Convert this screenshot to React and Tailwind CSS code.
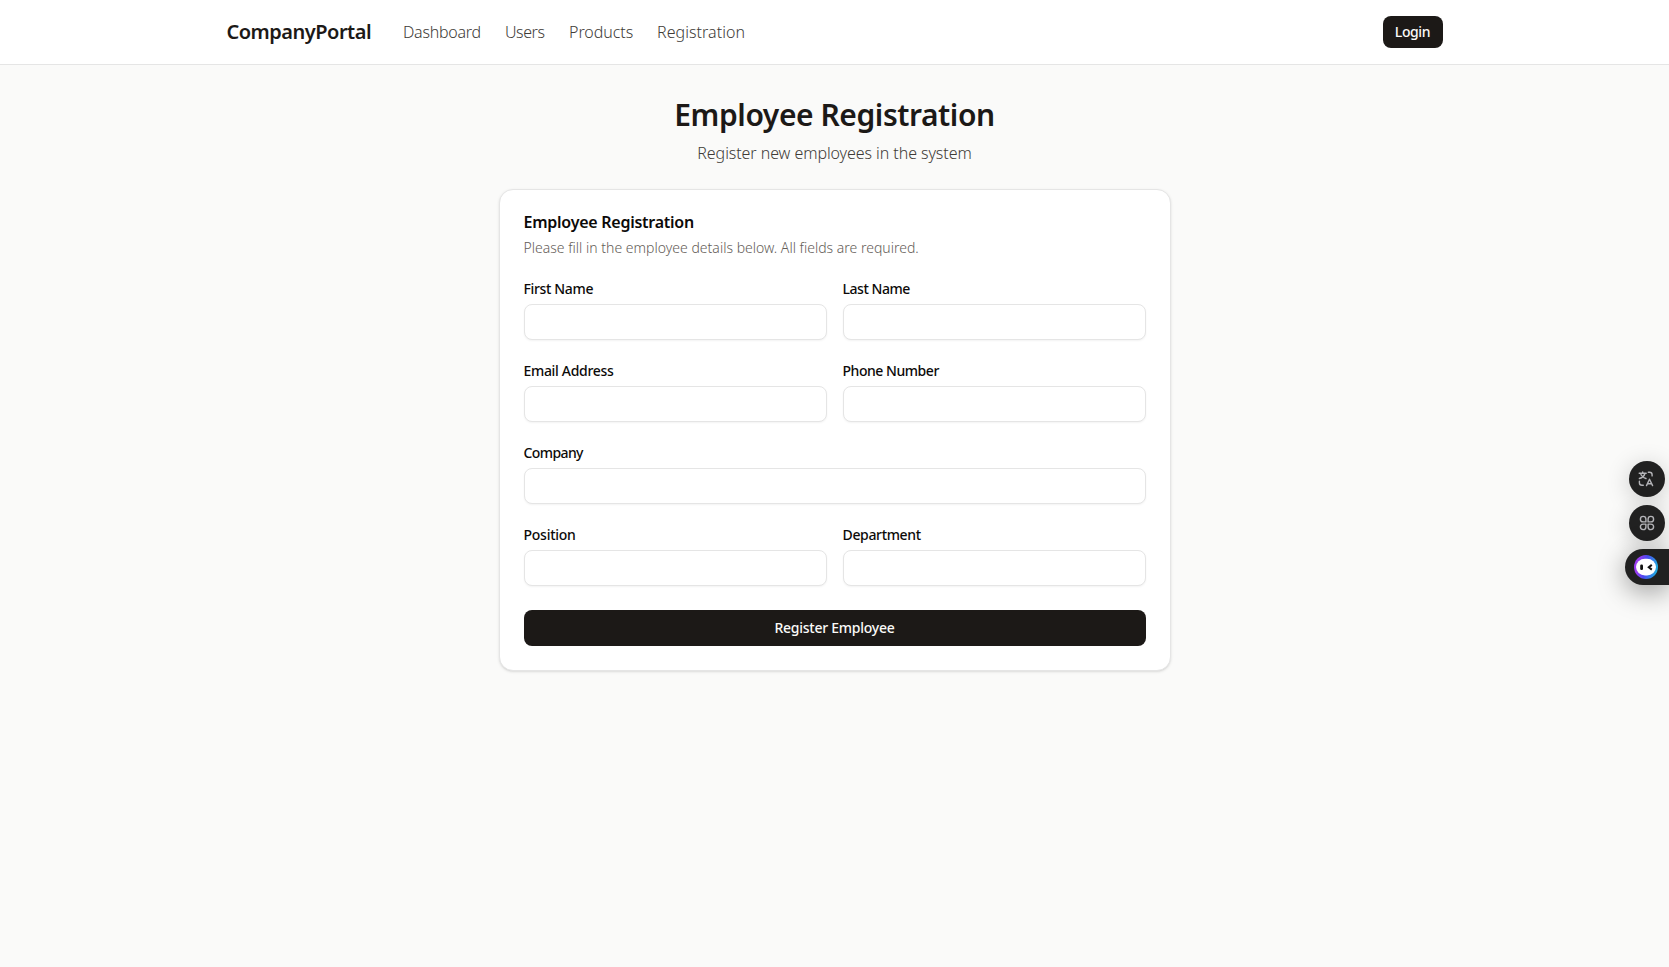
import React from "react";

const NAV = [
  { label: "Dashboard", cls: "w-[78px] tracking-[-0.27px]" },
  { label: "Users", cls: "w-[40px] tracking-[-0.45px]" },
  { label: "Products", cls: "w-[64px] tracking-[-0.04px]" },
  { label: "Registration", cls: "w-[88px] tracking-[0.05px]" },
];

function Field({ label, tracking = "tracking-[-0.35px]", className = "" }) {
  return (
    <label className={`grid gap-2 ${className}`}>
      <span className={`text-sm leading-none font-medium text-[#0c0a09] ${tracking}`}>{label}</span>
      <input className="h-9 w-full rounded-lg border border-[#e5e5e5] bg-white px-3 text-sm shadow-xs outline-none" />
    </label>
  );
}

function TranslateIcon() {
  return (
    <svg width="18" height="18" viewBox="0 0 18 18" fill="none" stroke="#b4b4b8" strokeWidth="1.4" strokeLinecap="round" strokeLinejoin="round">
      <path d="M1.2 3.3h7M4.7 1.9v1.4M6.9 3.5C6.3 5.8 4.3 7.7 1.4 8.5M2.6 3.6C3.3 5.8 5.2 7.7 8 8.5" />
      <path d="M10.3 2.3h1.3a2.5 2.5 0 0 1 2.5 2.5v1.1" />
      <path d="M1.4 11.2v1.5a2.5 2.5 0 0 0 2.5 2.5h1.4" />
      <path d="M8.5 15.6l3-6.4L14.6 15.6M9.5 13.7h4" />
    </svg>
  );
}

function CloverIcon() {
  return (
    <svg width="18" height="18" viewBox="0 0 18 18" fill="none" stroke="#b4b4b8" strokeWidth="1.4" strokeLinejoin="round">
      <path d="M7.9 7.9H5.1A2.75 2.75 0 1 1 7.9 5.1Z" />
      <path d="M10.1 7.9h2.8A2.75 2.75 0 1 0 10.1 5.1Z" />
      <path d="M7.9 10.1H5.1A2.75 2.75 0 1 0 7.9 12.9Z" />
      <path d="M10.1 10.1h2.8A2.75 2.75 0 1 1 10.1 12.9Z" />
    </svg>
  );
}

function BotIcon() {
  return (
    <svg width="24" height="24" viewBox="0 0 24 24">
      <defs>
        <linearGradient id="ring" x1="0.1" y1="0.7" x2="0.9" y2="0.85">
          <stop offset="0" stopColor="#9a3cf0" />
          <stop offset="0.4" stopColor="#4a48f0" />
          <stop offset="1" stopColor="#22a8e0" />
        </linearGradient>
      </defs>
      <circle cx="12" cy="12" r="12" fill="url(#ring)" />
      <rect x="2" y="3.8" width="20" height="16.6" rx="9" ry="8.3" fill="#fff" />
      <rect x="6.2" y="9.6" width="2.8" height="5.4" rx="1.2" fill="#111" />
      <path d="M17.8 9.9L14.8 12.3l3 2.3" fill="none" stroke="#111" strokeWidth="2" />
    </svg>
  );
}

export default function App() {
  return (
    <div className="min-h-screen bg-[#fafaf9] font-['Noto_Sans',sans-serif]">
      <header className="border-b border-[#e5e5e5] bg-white">
        <div className="mx-auto flex h-16 max-w-7xl items-center justify-between px-8">
          <div className="flex items-center gap-8">
            <span className="w-[144.5px] text-xl font-semibold tracking-[-0.5px] whitespace-nowrap text-[#1c1917]">CompanyPortal</span>
            <nav className="flex gap-6">
              {NAV.map((n) => (
                <a key={n.label} className={`${n.cls} text-base font-light whitespace-nowrap text-[#403b37]`}>{n.label}</a>
              ))}
            </nav>
          </div>
          <button className="h-8 w-[60px] rounded-lg bg-[#1c1917] text-sm font-medium tracking-[-0.4px] text-[#fafaf9]">Login</button>
        </div>
      </header>

      <main className="mx-auto max-w-7xl px-8 py-8">
        <div className="mb-6 text-center">
          <h1 className="mb-2 text-3xl font-semibold tracking-[-0.43px] text-[#1c1917]">Employee Registration</h1>
          <p className="text-base font-light tracking-[-0.07px] text-[#403b37]">Register new employees in the system</p>
        </div>
        <section className="mx-auto flex max-w-2xl flex-col gap-6 rounded-[14px] border border-[#e5e5e5] bg-white p-6 shadow-sm">
          <div className="grid gap-2">
            <h2 className="text-base leading-none font-semibold tracking-[-0.25px] text-[#0c0a09]">Employee Registration</h2>
            <p className="text-sm font-light tracking-[0.01px] text-[#645d58]">Please fill in the employee details below. All fields are required.</p>
          </div>
          <form className="grid grid-cols-2 gap-x-4 gap-y-6">
            <Field label="First Name" />
            <Field label="Last Name" tracking="tracking-[-0.46px]" />
            <Field label="Email Address" tracking="tracking-[-0.32px]" />
            <Field label="Phone Number" tracking="tracking-[-0.46px]" />
            <Field label="Company" tracking="tracking-[-0.6px]" className="col-span-2" />
            <Field label="Position" tracking="tracking-[-0.25px]" />
            <Field label="Department" />
            <button type="button" className="col-span-2 h-9 rounded-lg bg-[#1c1917] text-sm font-medium tracking-[-0.25px] text-[#fafaf9]">Register Employee</button>
          </form>
        </section>
      </main>

      <aside className="fixed top-[461px] right-0 flex flex-col items-end gap-2">
        <div className="mr-1 flex size-9 items-center justify-center rounded-full bg-[#212121] shadow-[0_4px_24px_rgba(0,0,0,0.2)]"><TranslateIcon /></div>
        <div className="mr-1 flex size-9 items-center justify-center rounded-full bg-[#212121] shadow-[0_4px_24px_rgba(0,0,0,0.2)]"><CloverIcon /></div>
        <div className="flex h-9 w-11 items-center rounded-l-full bg-[#212121] pl-[9px] shadow-[0_6px_28px_rgba(0,0,0,0.4)]"><BotIcon /></div>
      </aside>
    </div>
  );
}
